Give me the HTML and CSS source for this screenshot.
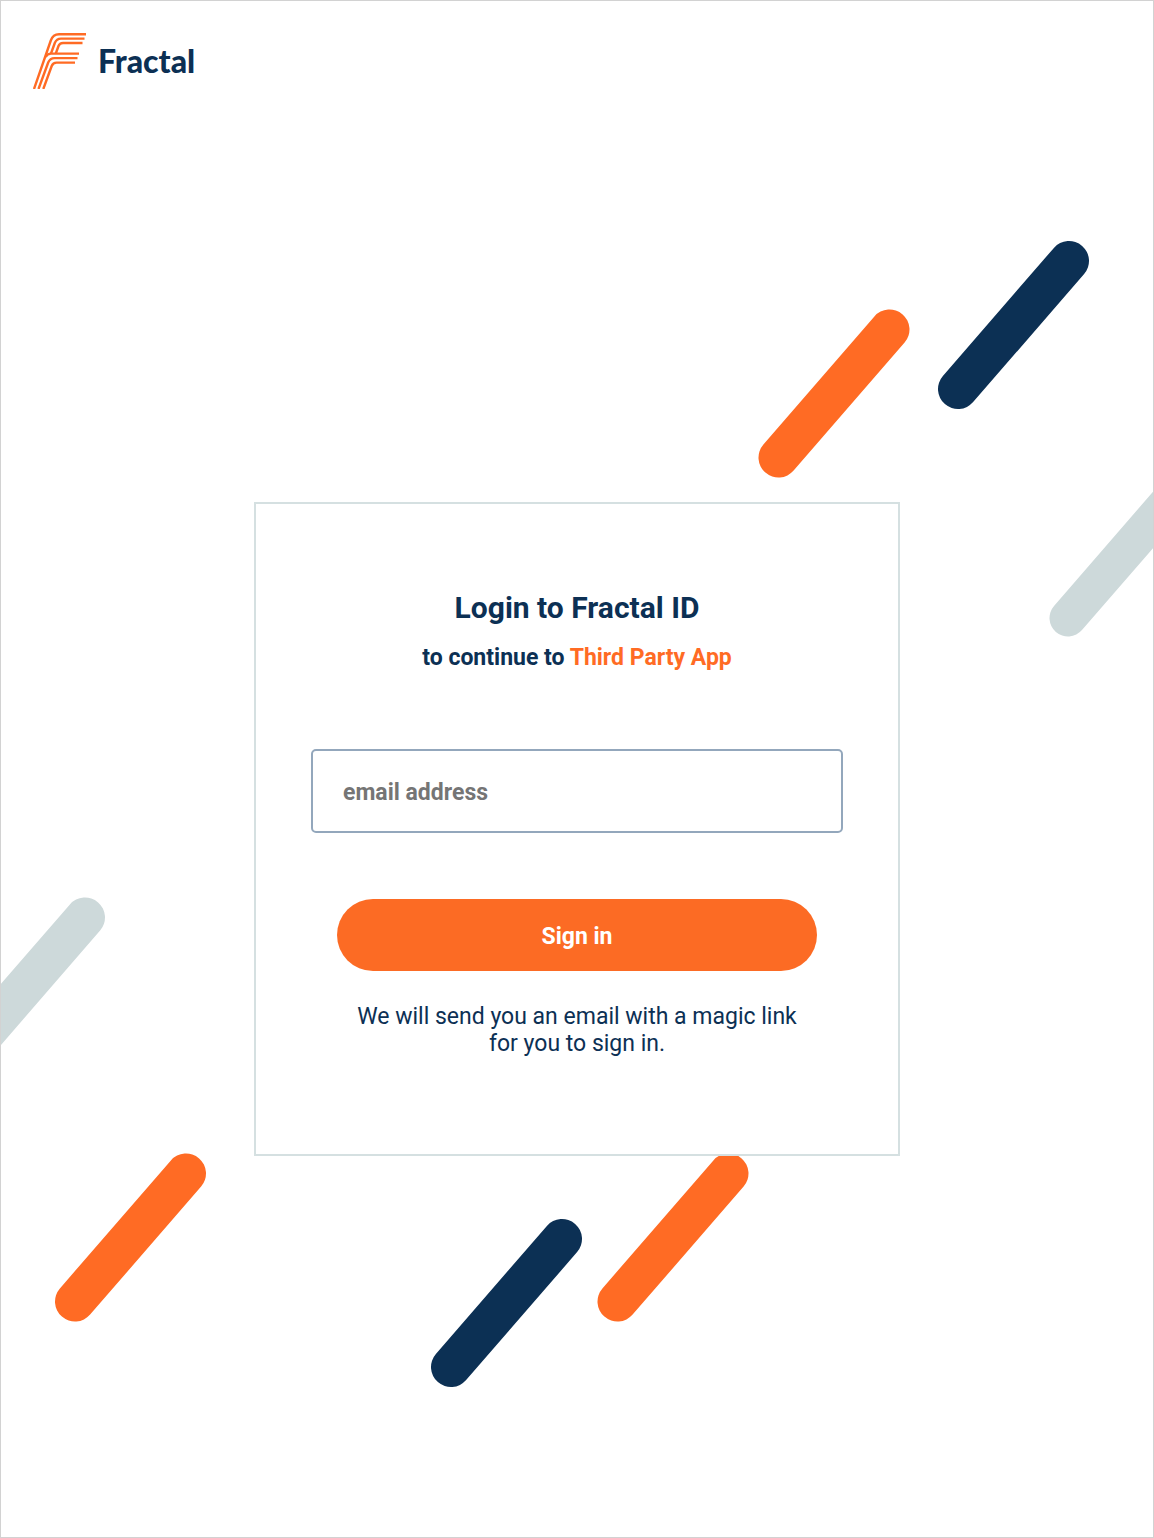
FILE: index.html
```html
<!DOCTYPE html>
<html lang="en">
<head>
<meta charset="utf-8">
<meta name="viewport" content="width=device-width, initial-scale=1">
<title>Login to Fractal ID</title>
<link rel="stylesheet" href="styles.css">
</head>
<body>
<div class="page">
  <svg class="backdrop" viewBox="1 1 1152 1536" preserveAspectRatio="xMidYMid slice" aria-hidden="true">
    <g class="bar bar-navy">
      <path d="M1069 261 958 389"/>
      <path d="M562 1239 451 1367"/>
    </g>
    <g class="bar bar-orange">
      <path d="M889.5 329.5 778.5 457.5"/>
      <path d="M186 1173.5 75 1301.5"/>
      <path d="M728.5 1173.5 617.5 1301.5"/>
    </g>
    <g class="bar bar-mist">
      <path d="M85 917.5-26 1045.5"/>
      <path class="bar-slim" d="M1179 490 1068 618"/>
    </g>
  </svg>

  <header class="header">
    <a class="brand" href="#">
      <svg class="brand-mark" viewBox="0 0 54 56" aria-hidden="true">
        <path d="M1 56 17.800 7.500Q20 1.200 26 1.200H53"/>
        <path d="M18 20.500 21.800 10Q23.500 5.600 28 5.600H51.500"/>
        <path d="M22.800 20.500 25.500 13Q26.600 10 30 10H49.500"/>
        <path d="M12.600 24Q14.300 20.600 18 20.600H46"/>
        <path d="M5.500 56 15.200 29.500Q17 25.100 21.500 25.100H44.500"/>
        <path d="M10.300 56 18.700 33Q20 29.600 23.500 29.600H42"/>
      </svg>
      <span class="brand-name">Fractal</span>
    </a>
  </header>

  <main class="main">
    <form class="card">
      <h1 class="title">Login to Fractal ID</h1>
      <p class="subtitle">to continue to <span class="app-name">Third Party App</span></p>
      <input class="email" type="email" placeholder="email address" aria-label="email address">
      <button class="submit" type="submit">Sign in</button>
      <p class="note">We will send you an email with a magic link for you to sign in.</p>
    </form>
  </main>
</div>
</body>
</html>
```
FILE: styles.css
```css
* {
  box-sizing: border-box;
}

body {
  margin: 0;
  background: #fff;
  color: #0c3054;
  font-family: Roboto, "Liberation Sans", sans-serif;
}

.page {
  position: relative;
  display: flex;
  flex-direction: column;
  min-height: 100vh;
  border: 1px solid #d2d2d2;
  overflow: hidden;
}

.backdrop {
  position: absolute;
  inset: 0;
  width: 100%;
  height: 100%;
}

.bar {
  fill: none;
  stroke-width: 40;
  stroke-linecap: round;
}

.bar-navy { stroke: #0c3054; }
.bar-orange { stroke: #ff6b24; }
.bar-mist { stroke: #cdd9da; }
.bar-slim { stroke-width: 37; }

.header {
  position: relative;
  display: flex;
  padding: 32px;
}

.brand {
  display: flex;
  align-items: center;
  gap: 11px;
  color: inherit;
  text-decoration: none;
}

.brand-mark {
  width: 54px;
  height: 56px;
  fill: none;
  stroke: #ff6b24;
  stroke-width: 2.4;
}

.brand-name {
  font-family: Lato, sans-serif;
  font-size: 32px;
  font-weight: 900;
  line-height: 40px;
}

.main {
  position: relative;
  flex: 1;
  display: flex;
  align-items: center;
  justify-content: center;
}

.card {
  display: flex;
  flex-direction: column;
  align-items: center;
  width: 100%;
  max-width: 646px;
  padding: 84px 55px 97px;
  border: 2px solid #d5e0e1;
  background: #fff;
  text-align: center;
}

.title {
  margin: 0;
  font-size: 30px;
  font-weight: 700;
  line-height: 40px;
}

.subtitle {
  margin: 14px 0 75px;
  font-size: 23px;
  font-weight: 700;
  line-height: 32px;
}

.app-name {
  color: #ff6b24;
}

.email {
  width: 100%;
  height: 84px;
  padding: 2px 30px 0;
  border: 2px solid #93a7bc;
  border-radius: 5px;
  background: #fff;
  color: #0c3054;
  font: 700 23px/32px Roboto, "Liberation Sans", sans-serif;
}

.email::placeholder {
  color: #757575;
}

.submit {
  width: 100%;
  max-width: 480px;
  height: 72px;
  margin: 66px 0 32px;
  padding: 4px 0 0;
  border: 0;
  border-radius: 36px;
  background: #fc6b24;
  color: #fff;
  font: 700 23px/32px Roboto, "Liberation Sans", sans-serif;
}

.note {
  max-width: 460px;
  margin: 0;
  font-size: 23px;
  line-height: 27px;
}
```
